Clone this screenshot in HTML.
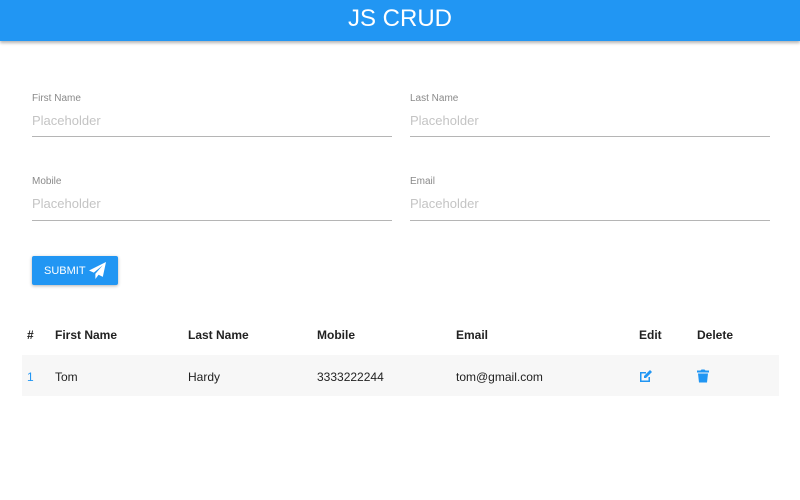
<!DOCTYPE html>
<html><head><style>
body{margin:0;width:800px;height:500px;background:#fff;font-family:"Liberation Sans",sans-serif;position:relative;overflow:hidden}
.hdr{position:absolute;left:0;top:0;width:800px;height:41px;background:#2196f3;box-shadow:0 2px 3px rgba(0,0,0,.3);color:#fff;text-align:center;font-size:24px;line-height:38px}
.lbl{position:absolute;font-size:10px;color:#8a8a8a}
.ph{position:absolute;font-size:13px;color:#c4c4c4}
.ln{position:absolute;height:1px;background:#b5b5b5;width:360px}
.btn{position:absolute;left:32px;top:256px;width:86px;height:29px;background:#2196f3;border-radius:2px;box-shadow:0 1px 3px rgba(0,0,0,.3);color:#fff;font-size:11px;line-height:30px}
.t{position:absolute;font-size:12px;color:#222}
.b{font-weight:bold}
.row{position:absolute;left:22px;top:355px;width:757px;height:41px;background:#f7f7f7}
</style></head><body>
<div class="hdr">JS CRUD</div>
<div class="lbl" style="left:32px;top:93px">First Name</div>
<div class="ph" style="left:32px;top:113px">Placeholder</div>
<div class="ln" style="left:32px;top:136px"></div>
<div class="lbl" style="left:410px;top:93px">Last Name</div>
<div class="ph" style="left:410px;top:113px">Placeholder</div>
<div class="ln" style="left:410px;top:136px"></div>
<div class="lbl" style="left:32px;top:176px">Mobile</div>
<div class="ph" style="left:32px;top:196px">Placeholder</div>
<div class="ln" style="left:32px;top:220px"></div>
<div class="lbl" style="left:410px;top:176px">Email</div>
<div class="ph" style="left:410px;top:196px">Placeholder</div>
<div class="ln" style="left:410px;top:220px"></div>
<div class="btn"><span style="position:absolute;left:12px">SUBMIT</span>
<svg style="position:absolute;left:57px;top:6px" width="17" height="17" viewBox="0 0 16 16"><path d="M16 0L0 8l4.5 2L13 3 6 11v5l3-4 4 2z" fill="#fff"/></svg></div>
<div class="t b" style="left:27px;top:328px">#</div>
<div class="t b" style="left:55px;top:328px">First Name</div>
<div class="t b" style="left:188px;top:328px">Last Name</div>
<div class="t b" style="left:317px;top:328px">Mobile</div>
<div class="t b" style="left:456px;top:328px">Email</div>
<div class="t b" style="left:639px;top:328px">Edit</div>
<div class="t b" style="left:697px;top:328px">Delete</div>
<div class="row"></div>
<div class="t" style="left:27px;top:370px;color:#2196f3">1</div>
<div class="t" style="left:55px;top:370px">Tom</div>
<div class="t" style="left:188px;top:370px">Hardy</div>
<div class="t" style="left:317px;top:370px">3333222244</div>
<div class="t" style="left:456px;top:370px">tom@gmail.com</div>
<svg style="position:absolute;left:639px;top:369px" width="14" height="14" viewBox="0 0 14 14"><path d="M1 3h6v1.5H2.5v7h7V8H11v5H1z" fill="#2196f3"/><path d="M5 7l6-6 2 2-6 6H5z" fill="#2196f3"/></svg>
<svg style="position:absolute;left:697px;top:369px" width="12" height="14" viewBox="0 0 12 14"><path d="M0 1.5h3.5L4.5 0.5h3l1 1H12v2H0z M1 4.5h10l-1 9H2z" fill="#2196f3"/></svg>
</body></html>
